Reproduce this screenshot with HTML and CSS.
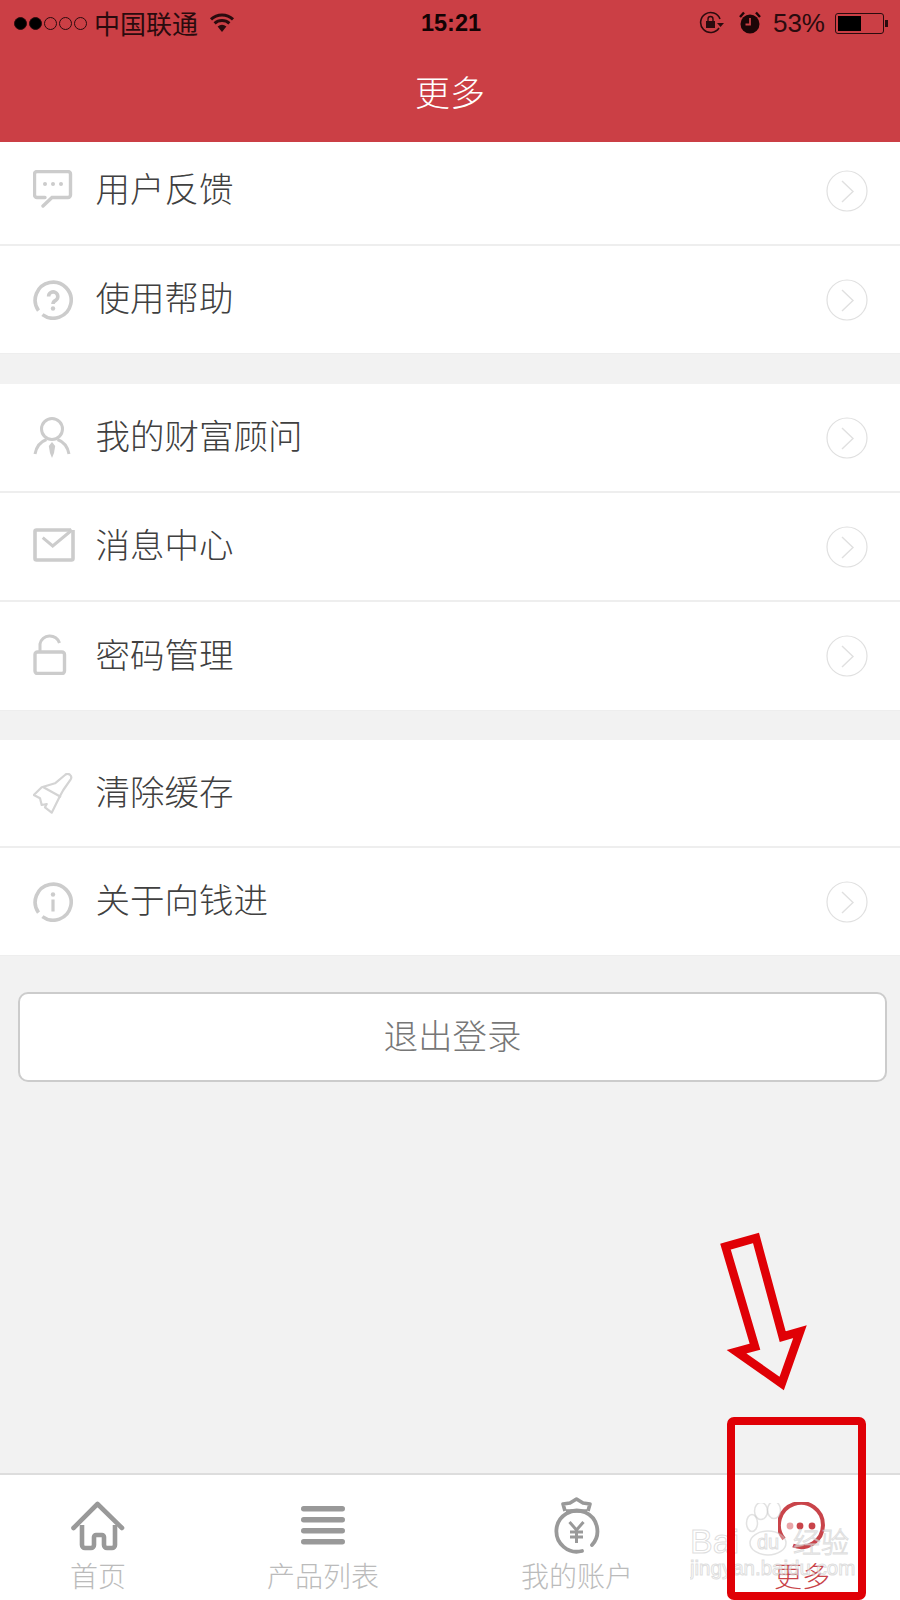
FILE: index.html
```html
<!DOCTYPE html>
<html lang="zh-CN">
<head>
    <meta charset="UTF-8">
    <title>更多</title>
    <link rel="stylesheet" href="styles.css">
</head>
<body>
    <div class="page">
        <header class="header">
            <div class="status">
                <div class="status-left">
                    <span class="dot on"></span><span class="dot on"></span><span class="dot"></span><span class="dot"></span><span class="dot"></span>
                    <span class="carrier">中国联通</span>
                    <svg class="wifi" width="26" height="20" viewBox="0 0 26 20"><path d="M13 19 L8.6 13.6 A7 7 0 0 1 17.4 13.6 Z" fill="#2a0b0e"/><path d="M5.6 10.4 A11 11 0 0 1 20.4 10.4" fill="none" stroke="#2a0b0e" stroke-width="3"/><path d="M2 6.4 A16 16 0 0 1 24 6.4" fill="none" stroke="#2a0b0e" stroke-width="3"/></svg>
                </div>
                <div class="time">15:21</div>
                <div class="status-right">
                    <svg width="26" height="24" viewBox="0 0 26 24"><path d="M20 17 A10 10 0 1 1 21 8" fill="none" stroke="#2a0b0e" stroke-width="1.6"/><path d="M18 12 h7 l-3.5 4 z" fill="#2a0b0e"/><rect x="7" y="10" width="9" height="7" fill="#2a0b0e"/><path d="M9 10 V8 a2.5 2.5 0 0 1 5 0 V10" fill="none" stroke="#2a0b0e" stroke-width="1.4"/></svg>
                    <svg class="alarm" width="22" height="24" viewBox="0 0 22 24"><circle cx="11" cy="13" r="9.5" fill="#1c0507"/><path d="M11 7 V13.5 H6.5" fill="none" stroke="#cb3f45" stroke-width="1.8"/><path d="M1 6 L5 1.5 M21 6 L17 1.5" stroke="#1c0507" stroke-width="2.4"/></svg>
                    <span class="percent">53%</span>
                    <div class="battery"><div class="battery-fill"></div></div>
                    <div class="battery-nub"></div>
                </div>
            </div>
            <div class="title">更多</div>
        </header>

        <div class="group group-first">
            <div class="row row-top">
                <span class="icon-box"><svg width="40" height="40" viewBox="0 0 40 40"><path d="M12 27.5 H4 a2.5 2.5 0 0 1 -2.5 -2.5 V4 a2.5 2.5 0 0 1 2.5 -2.5 H35 a2.5 2.5 0 0 1 2.5 2.5 V25 a2.5 2.5 0 0 1 -2.5 2.5 H19 L10 36" fill="none" stroke="#ccc" stroke-width="3.4" stroke-linecap="round"/><circle cx="12" cy="14" r="2" fill="#ccc"/><circle cx="20" cy="14" r="2" fill="#ccc"/><circle cx="28" cy="14" r="2" fill="#ccc"/></svg></span>
                <span class="row-text">用户反馈</span>
                <svg class="chevron" width="42" height="42" viewBox="0 0 42 42"><circle cx="21" cy="21" r="20" fill="none" stroke="#e0e0e0" stroke-width="1.2"/><path d="M16 11 L27 21.5 L16 32" fill="none" stroke="#e0e0e0" stroke-width="1.4"/></svg>
            </div>
            <div class="row row-short last">
                <span class="icon-box"><svg width="40" height="40" viewBox="0 0 40 40"><path d="M9.4 34.6 A18 18 0 1 0 5.5 30.6" fill="none" stroke="#ccc" stroke-width="3.6"/><path d="M15.6 16.5 a4.6 4.6 0 1 1 7 3.9 c-1.8 1.1 -2.6 1.7 -2.6 3.6" fill="none" stroke="#ccc" stroke-width="3.6"/><circle cx="20" cy="28.5" r="2.2" fill="#ccc"/></svg></span>
                <span class="row-text">使用帮助</span>
                <svg class="chevron" width="42" height="42" viewBox="0 0 42 42"><circle cx="21" cy="21" r="20" fill="none" stroke="#e0e0e0" stroke-width="1.2"/><path d="M16 11 L27 21.5 L16 32" fill="none" stroke="#e0e0e0" stroke-width="1.4"/></svg>
            </div>
        </div>

        <div class="group">
            <div class="row">
                <span class="icon-box"><svg width="40" height="42" viewBox="0 0 40 42"><circle cx="19" cy="12" r="10.5" fill="none" stroke="#ccc" stroke-width="3"/><path d="M2 37 C3.5 29 8 24.5 13.5 22.5 M36 37 C34.5 29 30 24.5 24.5 22.5" fill="none" stroke="#ccc" stroke-width="3"/><path d="M19 25 L15.8 29 L17 36 L19 41 L21 36 L22.2 29 Z" fill="#ccc"/></svg></span>
                <span class="row-text">我的财富顾问</span>
                <svg class="chevron" width="42" height="42" viewBox="0 0 42 42"><circle cx="21" cy="21" r="20" fill="none" stroke="#e0e0e0" stroke-width="1.2"/><path d="M16 11 L27 21.5 L16 32" fill="none" stroke="#e0e0e0" stroke-width="1.4"/></svg>
            </div>
            <div class="row">
                <span class="icon-box raised"><svg width="42" height="34" viewBox="0 0 42 34"><path d="M38 2 H3.5 a1.5 1.5 0 0 0 -1.5 1.5 V30.5 a1.5 1.5 0 0 0 1.5 1.5 H38.5 a1.5 1.5 0 0 0 1.5 -1.5 V2" fill="none" stroke="#ccc" stroke-width="3.6"/><path d="M9.7 9.7 L19.7 18 L39 2" fill="none" stroke="#ccc" stroke-width="3"/></svg></span>
                <span class="row-text">消息中心</span>
                <svg class="chevron" width="42" height="42" viewBox="0 0 42 42"><circle cx="21" cy="21" r="20" fill="none" stroke="#e0e0e0" stroke-width="1.2"/><path d="M16 11 L27 21.5 L16 32" fill="none" stroke="#e0e0e0" stroke-width="1.4"/></svg>
            </div>
            <div class="row last">
                <span class="icon-box raised"><svg width="40" height="42" viewBox="0 0 40 42"><rect x="2" y="19" width="29.5" height="21.5" rx="2.5" fill="none" stroke="#ccc" stroke-width="3.4"/><path d="M7 18 V11 a10 9.5 0 0 1 19.5 -1" fill="none" stroke="#ccc" stroke-width="3"/></svg></span>
                <span class="row-text">密码管理</span>
                <svg class="chevron" width="42" height="42" viewBox="0 0 42 42"><circle cx="21" cy="21" r="20" fill="none" stroke="#e0e0e0" stroke-width="1.2"/><path d="M16 11 L27 21.5 L16 32" fill="none" stroke="#e0e0e0" stroke-width="1.4"/></svg>
            </div>
        </div>

        <div class="group group-end">
            <div class="row">
                <span class="icon-box"><svg width="40" height="41" viewBox="0 0 40 41"><path d="M32 2 A3.6 3.6 0 0 1 37.7 6.3 L30.3 17 L27 23 L18.7 39.7 L12 34.3 L13.7 31 L8.7 32 L7 25.3 L0.8 22 L8.7 14.3 L22 10.3 Z" fill="none" stroke="#d4d4d4" stroke-width="2.2" stroke-linejoin="round"/><path d="M10 14 L28 24" fill="none" stroke="#d4d4d4" stroke-width="2.2"/></svg></span>
                <span class="row-text">清除缓存</span>
            </div>
            <div class="row last">
                <span class="icon-box"><svg width="40" height="40" viewBox="0 0 40 40"><path d="M9.4 34.6 A18 18 0 1 0 5.5 30.6" fill="none" stroke="#ccc" stroke-width="3.6"/><circle cx="20" cy="12.5" r="2.2" fill="#ccc"/><rect x="18.4" y="17.5" width="3.2" height="12" fill="#ccc"/></svg></span>
                <span class="row-text">关于向钱进</span>
                <svg class="chevron" width="42" height="42" viewBox="0 0 42 42"><circle cx="21" cy="21" r="20" fill="none" stroke="#e0e0e0" stroke-width="1.2"/><path d="M16 11 L27 21.5 L16 32" fill="none" stroke="#e0e0e0" stroke-width="1.4"/></svg>
            </div>
        </div>

        <button class="logout">退出登录</button>

        <nav class="tabbar">
            <div class="tab">
                <div class="tab-icon"><svg width="54" height="50" viewBox="0 0 54 50"><path d="M2.5 27 L26.5 3 L51 27" fill="none" stroke="#999" stroke-width="4.6" stroke-linecap="round" stroke-linejoin="round"/><path d="M11 24 V44 a3 3 0 0 0 3 3 h6 a3 3 0 0 0 3 -3 V36 a2 2 0 0 1 2 -2 h6 a2 2 0 0 1 2 2 V44 a3 3 0 0 0 3 3 h5 a3 3 0 0 0 3 -3 V24" fill="none" stroke="#999" stroke-width="4.6"/></svg></div>
                <span>首页</span>
            </div>
            <div class="tab">
                <div class="tab-icon"><svg width="44" height="40" viewBox="0 0 44 40"><rect y="0" width="44" height="5.4" rx="2.7" fill="#999"/><rect y="11" width="44" height="5.4" rx="2.7" fill="#999"/><rect y="22" width="44" height="5.4" rx="2.7" fill="#999"/><rect y="33" width="44" height="5.4" rx="2.7" fill="#999"/></svg></div>
                <span>产品列表</span>
            </div>
            <div class="tab">
                <div class="tab-icon"><svg width="46" height="58" viewBox="0 0 46 58"><path d="M28 54 A20.5 20.5 0 1 1 38 48" fill="none" stroke="#999" stroke-width="3.8" stroke-linecap="round"/><path d="M11 14 L9 7 L16 6 L22.5 2 L29 6 L36 7 L34 14 M12 14 H33" fill="none" stroke="#999" stroke-width="3.6" stroke-linejoin="round"/><path d="M15.5 25 L22.5 33 L29.5 25 M22.5 33 V46 M16 35 H29 M16 40 H29" fill="none" stroke="#999" stroke-width="3"/></svg></div>
                <span>我的账户</span>
            </div>
            <div class="tab active">
                <div class="tab-icon"><svg width="48" height="48" viewBox="0 0 48 48"><path d="M15 43.5 A22 22 0 1 0 6 37" fill="none" stroke="#c9444a" stroke-width="4"/><circle cx="12" cy="24" r="3.4" fill="#e9a5a8"/><circle cx="22" cy="24" r="3.4" fill="#c9444a"/><circle cx="34" cy="24" r="3.4" fill="#c9444a"/></svg></div>
                <span>更多</span>
            </div>
        </nav>

        <!-- baidu watermark -->
        <svg class="watermark" width="170" height="80" viewBox="0 0 170 80">
            <ellipse cx="62" cy="20" rx="5.5" ry="8.5" class="paw"/><ellipse cx="71" cy="8" rx="6.5" ry="8.5" class="paw"/><ellipse cx="84" cy="7" rx="6.5" ry="8.5" class="paw"/>
            <ellipse cx="78" cy="40" rx="18" ry="12" class="paw"/>
            <text x="0" y="50" class="wm-big">Bai</text>
            <text x="67" y="46" class="wm-small">du</text>
            <text x="103" y="50" class="wm-cn">经验</text>
            <text x="0" y="72" class="wm-url">jingyan.baidu.com</text>
        </svg>

        <!-- annotation drawn over the screenshot -->
        <svg class="arrow" width="110" height="175" viewBox="0 0 110 175"><path d="M25.5 26.7 L56 18 L82.7 116.7 L100 111.7 L81.7 163.5 L36.5 131.7 L55 126.7 Z" fill="none" stroke="#e00006" stroke-width="8.5"/></svg>
        <div class="highlight"></div>
    </div>
</body>
</html>
```

FILE: styles.css
```css
* {
    box-sizing: border-box;
}
body {
    margin: 0;
    font-family: "Noto Sans CJK SC", "Noto Sans", sans-serif;
    font-weight: 300;
}
.page {
    position: relative;
    width: 900px;
    height: 1600px;
    overflow: hidden;
    background: #f2f2f2;
    display: flex;
    flex-direction: column;
}

/* header */
.header {
    height: 142px;
    background: #cb3f45;
    flex-shrink: 0;
}
.status {
    height: 46px;
    padding: 0 12px 0 14px;
    display: grid;
    grid-template-columns: 1fr auto 1fr;
    align-items: center;
    color: #2a0b0e;
}
.status-left, .status-right {
    display: flex;
    align-items: center;
}
.status-right {
    justify-content: flex-end;
}
.dot {
    width: 13px;
    height: 13px;
    margin-right: 2px;
    border: 1px solid #2a0b0e;
    border-radius: 50%;
}
.dot.on {
    background: #000;
}
.carrier {
    margin-left: 5px;
    font-size: 26px;
    line-height: 30px;
    font-weight: 400;
}
.wifi {
    margin-left: 11px;
}
.time {
    font-family: "Liberation Sans", sans-serif;
    font-size: 23.5px;
    font-weight: 700;
    color: #140304;
}
.alarm {
    margin-left: 14px;
}
.percent {
    margin-left: 12px;
    font-family: "Liberation Sans", sans-serif;
    font-size: 26px;
    font-weight: 400;
}
.battery {
    width: 49px;
    height: 21px;
    margin-left: 10px;
    padding: 2px;
    border: 1px solid #2a0b0e;
    border-radius: 3px;
}
.battery-fill {
    width: 23px;
    height: 100%;
    background: #000;
}
.battery-nub {
    width: 3px;
    height: 7px;
    margin-left: 1px;
    background: #2a0b0e;
}
.title {
    margin-top: 20px;
    text-align: center;
    font-size: 35px;
    line-height: 50px;
    color: #fff;
}

/* list */
.group {
    background: #fff;
    margin-bottom: 29px;
    flex-shrink: 0;
}
.group-first {
    margin-bottom: 30px;
}
.group-end {
    margin-bottom: 36px;
}
.row {
    height: 109px;
    padding: 0 32px 0 33px;
    border-bottom: 2px solid #eee;
    display: flex;
    align-items: center;
}
.row.last {
    border-bottom: 1px solid #eee;
}
.row-top {
    height: 104px;
    padding-bottom: 6px;
}
.row-top .chevron {
    margin-top: 2px;
}
.row-short, .group-end .row {
    height: 108px;
}
.icon-box {
    flex-shrink: 0;
    width: 62.5px;
    display: flex;
    align-items: center;
}
.icon-box.raised {
    margin-bottom: 4px;
}
.row-text {
    padding-bottom: 7px;
    font-size: 34.5px;
    line-height: 48px;
    color: #404040;
}
.chevron {
    margin-left: auto;
}

/* logout */
.logout {
    flex-shrink: 0;
    width: 869px;
    height: 90px;
    margin-left: 18px;
    padding-bottom: 8px;
    background: #fff;
    border: 2px solid #ccc;
    border-radius: 10px;
    font-family: inherit;
    font-weight: 300;
    font-size: 34.5px;
    color: #777;
}

/* tab bar */
.tabbar {
    margin-top: auto;
    height: 127px;
    background: #fff;
    border-top: 2px solid #ddd;
    padding-top: 22px;
    display: grid;
    grid-template-columns: 196px 254px 254px 196px;
}
.tab {
    display: flex;
    flex-direction: column;
    align-items: center;
    font-size: 28px;
    line-height: 40px;
    color: #bbb;
}
.tab-icon {
    height: 58px;
    display: flex;
    align-items: center;
}
.tab.active {
    color: #c9444a;
}

/* watermark */
.watermark {
    position: absolute;
    left: 690px;
    top: 1503px;
}
.watermark .paw {
    fill: rgba(255, 255, 255, 0.3);
    stroke: rgba(190, 190, 190, 0.45);
    stroke-width: 1.5;
}
.watermark text {
    font-family: "Liberation Sans", "Noto Sans CJK SC", sans-serif;
    fill: rgba(255, 255, 255, 0.5);
    stroke: rgba(190, 190, 190, 0.5);
    stroke-width: 1;
}
.wm-big {
    font-size: 34px;
}
.wm-small {
    font-size: 20px;
}
.wm-cn {
    font-size: 28px;
}
.wm-url {
    font-size: 20.5px;
    stroke-width: 0.6;
}

/* red annotation */
.arrow {
    position: absolute;
    left: 700px;
    top: 1220px;
}
.highlight {
    position: absolute;
    left: 727px;
    top: 1417px;
    width: 139px;
    height: 183px;
    border: 8px solid #e00006;
    border-radius: 7px;
}
```
